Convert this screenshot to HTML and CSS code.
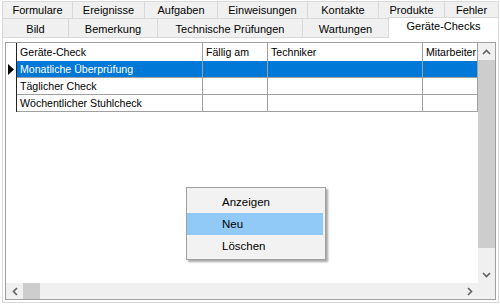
FILE: index.html
```html
<!DOCTYPE html>
<html lang="de">
<head>
    <meta charset="UTF-8">
    <title>Geräte-Checks</title>
    <link rel="stylesheet" href="styles.css">
</head>
<body>
    <div class="window">
        <div class="tab-row row-top">
            <div class="tab">Formulare</div>
            <div class="tab">Ereignisse</div>
            <div class="tab">Aufgaben</div>
            <div class="tab">Einweisungen</div>
            <div class="tab">Kontakte</div>
            <div class="tab">Produkte</div>
            <div class="tab">Fehler</div>
        </div>
        <div class="tab-row row-bottom">
            <div class="tab">Bild</div>
            <div class="tab">Bemerkung</div>
            <div class="tab">Technische Prüfungen</div>
            <div class="tab">Wartungen</div>
            <div class="tab active">Geräte-Checks</div>
        </div>

        <div class="panel">
            <div class="grid-box">
                <div class="grid-main">
                    <div class="grid">
                        <div class="cell indicator head"></div>
                        <div class="cell head">Geräte-Check</div>
                        <div class="cell head">Fällig am</div>
                        <div class="cell head">Techniker</div>
                        <div class="cell head">Mitarbeiter</div>

                        <div class="cell indicator">
                            <svg width="7" height="11" viewBox="0 0 7 11"><polygon points="0,0 6,5.5 0,11" fill="#000"/></svg>
                        </div>
                        <div class="cell row selected">Monatliche Überprüfung</div>
                        <div class="cell row selected"></div>
                        <div class="cell row selected"></div>
                        <div class="cell row selected"></div>

                        <div class="cell indicator"></div>
                        <div class="cell row">Täglicher Check</div>
                        <div class="cell row"></div>
                        <div class="cell row"></div>
                        <div class="cell row"></div>

                        <div class="cell indicator"></div>
                        <div class="cell row">Wöchentlicher Stuhlcheck</div>
                        <div class="cell row"></div>
                        <div class="cell row"></div>
                        <div class="cell row"></div>
                    </div>

                    <div class="vscroll">
                        <div class="arrow-btn">
                            <svg width="9" height="6" viewBox="0 0 9 6"><polyline points="1,5 4.5,1.5 8,5" fill="none" stroke="#606060" stroke-width="1.6"/></svg>
                        </div>
                        <div class="vthumb"></div>
                        <div class="vtrack"></div>
                        <div class="arrow-btn">
                            <svg width="9" height="6" viewBox="0 0 9 6"><polyline points="1,1 4.5,4.5 8,1" fill="none" stroke="#606060" stroke-width="1.6"/></svg>
                        </div>
                    </div>
                </div>

                <div class="hscroll-row">
                    <div class="hscroll">
                        <div class="arrow-btn h">
                            <svg width="6" height="9" viewBox="0 0 6 9"><polyline points="5,1 1.5,4.5 5,8" fill="none" stroke="#606060" stroke-width="1.6"/></svg>
                        </div>
                        <div class="hthumb"></div>
                        <div class="htrack"></div>
                        <div class="arrow-btn h">
                            <svg width="6" height="9" viewBox="0 0 6 9"><polyline points="1,1 4.5,4.5 1,8" fill="none" stroke="#606060" stroke-width="1.6"/></svg>
                        </div>
                    </div>
                    <div class="corner"></div>
                </div>
            </div>
        </div>

        <div class="context-menu">
            <div class="menu-item">Anzeigen</div>
            <div class="menu-item hover">Neu</div>
            <div class="menu-item">Löschen</div>
        </div>
    </div>
</body>
</html>
```

FILE: styles.css
```css
/* Fenster mit Reitern */
* {
    margin: 0;
    padding: 0;
    box-sizing: border-box;
}

body {
    background-color: #ffffff;
    font-family: 'Liberation Sans', Arial, sans-serif;
    font-size: 11px;
    color: #000000;
}

.window {
    position: relative;
    width: 500px;
    height: 305px;
    padding: 1px 0 0 2px;
}

/* Reiter */
.tab-row {
    display: flex;
    align-items: flex-end;
}

.tab {
    height: 18px;
    line-height: 16px;
    text-align: center;
    white-space: nowrap;
    background-color: #f0f0f0;
    border: 1px solid #d9d9d9;
    margin-left: -1px;
}

.tab:first-child {
    margin-left: 0;
}

.row-top .tab:nth-child(1) { width: 71px; }
.row-top .tab:nth-child(2) { width: 73px; }
.row-top .tab:nth-child(3) { width: 74px; }
.row-top .tab:nth-child(4) { width: 91px; }
.row-top .tab:nth-child(5) { width: 72px; }
.row-top .tab:nth-child(6) { width: 67px; }
.row-top .tab:nth-child(7) { width: 55px; }

.row-bottom {
    height: 19px;
    margin-top: -1px;
}

.row-bottom .tab {
    height: 19px;
    line-height: 20px;
    border-bottom: none;
}

.row-bottom .tab:nth-child(1) { width: 67px; }
.row-bottom .tab:nth-child(2) { width: 90px; }
.row-bottom .tab:nth-child(3) { width: 146px; }
.row-bottom .tab:nth-child(4) { width: 87px; }

.row-bottom .tab.active {
    position: relative;
    z-index: 1;
    width: 111px;
    height: 21px;
    line-height: 17px;
    margin-bottom: -1px;
    background-color: #ffffff;
}

/* Seite */
.panel {
    width: 497px;
    height: 266px;
    border: 1px solid #d9d9d9;
    background-color: #ffffff;
    padding: 4px 2px 2px 2px;
}

.grid-box {
    width: 491px;
    height: 258px;
    border: 1px solid #a0a0a0;
    display: flex;
    flex-direction: column;
}

.grid-main {
    display: flex;
    height: 240px;
}

.grid {
    width: 472px;
    display: grid;
    grid-template-columns: 11px 186px 65px 155px 55px;
    grid-template-rows: 18px repeat(3, 17px);
    align-content: start;
    overflow: hidden;
    font-size: 10.6px;
}

.cell {
    border-right: 1px solid #a0a0a0;
    padding-left: 3px;
    white-space: nowrap;
    overflow: hidden;
}

.cell.head {
    line-height: 18px;
    padding-left: 3px;
}

.cell.row {
    line-height: 16px;
    border-bottom: 1px solid #a0a0a0;
}

.cell.indicator {
    border-right: 1px solid #222222;
    padding-left: 2px;
    padding-top: 3px;
}

.cell.selected {
    background-color: #0078d7;
    color: #ffffff;
}

/* Bildlaufleisten */
.vscroll {
    width: 17px;
    background-color: #f0f0f0;
    display: flex;
    flex-direction: column;
}

.arrow-btn {
    height: 17px;
    display: flex;
    align-items: center;
    justify-content: center;
}

.arrow-btn.h {
    width: 17px;
    height: 16px;
}

.vthumb {
    height: 188px;
    background-color: #cdcdcd;
}

.vtrack {
    flex: 1;
}

.hscroll-row {
    display: flex;
    height: 16px;
}

.hscroll {
    width: 472px;
    display: flex;
    background-color: #f0f0f0;
}

.hthumb {
    width: 17px;
    background-color: #cdcdcd;
}

.htrack {
    flex: 1;
}

.corner {
    width: 17px;
    background-color: #f0f0f0;
}

/* Kontextmenü */
.context-menu {
    position: absolute;
    left: 186px;
    top: 187px;
    width: 140px;
    height: 73px;
    background-color: #f2f2f2;
    border: 1px solid #a0a0a0;
    box-shadow: 2px 2px 2px rgba(0, 0, 0, 0.35);
    padding: 3px 2px 1px 0;
    font-size: 11.5px;
}

.menu-item {
    height: 22px;
    line-height: 22px;
    padding-left: 35px;
}

.menu-item.hover {
    background-color: #91c9f7;
}
```
